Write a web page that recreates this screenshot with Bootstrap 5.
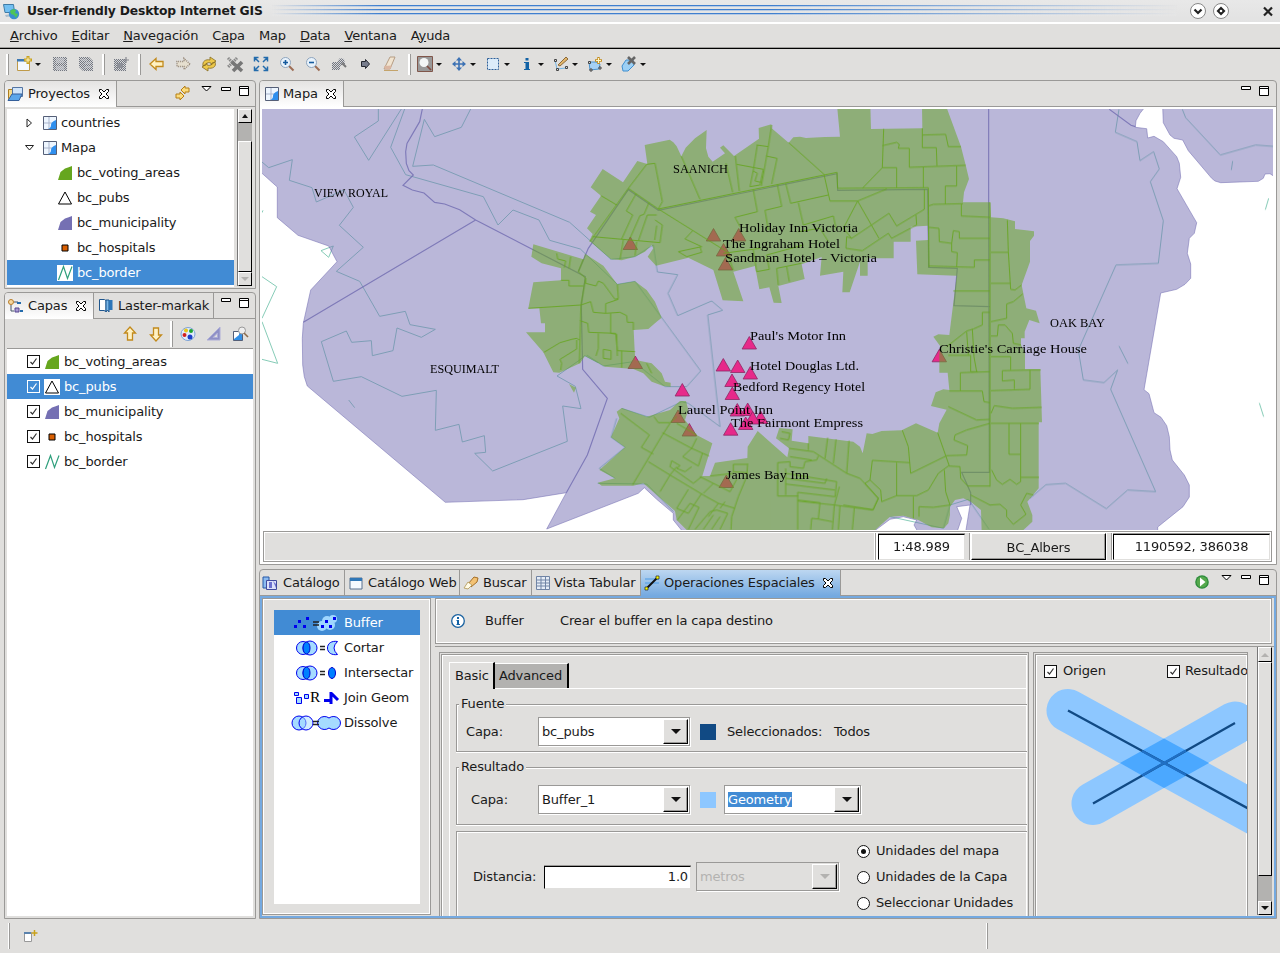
<!DOCTYPE html>
<html lang="es">
<head>
<meta charset="utf-8">
<title>User-friendly Desktop Internet GIS</title>
<link href="https://cdn.jsdelivr.net/npm/bootstrap@5.3.0/dist/css/bootstrap.min.css" rel="stylesheet">
<style>
body{width:1280px;height:953px;overflow:hidden;background:#e0dfdd;color:#1a1a1a;font:13px/16px "DejaVu Sans",sans-serif;letter-spacing:-.15px}
svg{display:block;flex:none;overflow:visible}
svg.clip{overflow:hidden}
.titlebar{height:22px;background:linear-gradient(#e8e8e8,#e2e2e2);font-weight:700;font-size:12.3px}
.stripes{height:11px;margin:0 13px 1px 9px;background:linear-gradient(90deg,#e5e5e5,transparent 12%,transparent 55%,#e5e5e5),repeating-linear-gradient(#3f7fcf 0 1px,#b6cae4 1px 2px,#e5e5e5 2px 4px)}
.menubar{height:27px;border-top:2px solid #fff;border-bottom:1px solid #000;box-shadow:inset 0 -1px #a09f9d;padding:0 0 1px 10px}
.menubar span{margin-right:14px}
.tools{height:31px;padding-bottom:1px}
.slot{width:26px;display:flex;justify-content:center;flex:none}
.slotd{width:34px;padding-left:2px;display:flex;align-items:center;gap:3px;flex:none}
.vsep{width:3px;height:21px;border-left:2px solid #fff;border-right:1px solid #9a9997;flex:none}
.caret{width:0;height:0;border:3px solid transparent;border-top:3px solid #111;border-bottom:0;flex:none}
.pane{border:1px solid #9a9997;border-radius:4px 4px 0 0;flex:none;overflow:hidden;display:flex;flex-direction:column}
.tabs{height:26px;border-bottom:1px solid #9a9997;flex:none;display:flex}
.vtab{height:25px;display:flex;align-items:center;border-right:1px solid #9a9997;padding-left:2px;white-space:nowrap;flex:none;overflow:hidden}
.vtab.on{background:linear-gradient(#e4e3e2,#fff);height:26px}
.vtab svg:first-child{margin-right:4px}
.trow{height:25px;display:flex;align-items:center;flex:none;white-space:nowrap}
.trow.sel,.oprow.sel{background:#418bd4;color:#fff}
.sbar{background:#b3b2b0;flex:none;width:15px;display:flex;flex-direction:column;border-left:1px solid #777}
.knob{background:#e0dfdd;border:1px solid #fff;border-right:1px solid #000;border-bottom:1px solid #000;display:flex;align-items:center;justify-content:center;flex:none}
.thick{box-shadow:inset -1px -1px #9a9997}
.chk{width:13px;height:13px;border:1px solid #111;background:#fff;color:#333;flex:none}
.sel .chk{background:transparent;border-color:#fff;color:#fff}
.etch{border:1px solid #9a9997;box-shadow:inset 1px 1px #fff,inset -1px -1px #fff}
.mstat{height:31px;border:1px solid #9a9997;background:#fff;padding:1px}
.mstat>div{flex:none}
.cell{background:#e0dfdd}
.field{background:#fff;border:1px solid #e0dfdd;border-top:1px solid #000;border-left:1px solid #000;box-shadow:0 -1px #9a9997;text-align:center}
.oprow{height:25px;display:flex;align-items:center;gap:3px;padding-left:17px}
.group{border:1px solid #9a9997;border-right:0;box-shadow:inset 1px 1px #fff,0 1px #fff;position:relative;margin-left:6px;flex:none}
.group>.cap{position:absolute;top:-9px;left:2px;background:#e0dfdd;padding:0 2px}
.combo{height:29px;background:#fff;border:1px solid #9a9997;box-shadow:1px 1px #fff;display:flex;flex:none;padding:1px 1px 1px 3px;align-items:stretch}
.combo .txt{flex:1;align-self:center}
.combo .knob{width:25px;box-shadow:inset -1px -1px #9a9997}
.arrow{width:0;height:0;border:5px solid transparent;border-top:5px solid #111;border-bottom:0}
.dis,.dis .txt{background:#e0dfdd;color:#b3b2b0}
.dis .arrow{border-top-color:#b3b2b0}
.radio{width:13px;height:13px;border:1px solid #111;border-radius:50%;background:#fff;display:flex;align-items:center;justify-content:center}
.radio i{width:5px;height:5px;border-radius:50%;background:#111}
.lbl{font-family:"Liberation Serif",serif;font-size:13px;letter-spacing:0}
</style>
</head>
<body class="d-flex flex-column">
<svg width="0" height="0" class="position-absolute">
<defs>
<symbol id="x" viewBox="0 0 12 12"><path d="M1.5 1.5h2L6 4l2.500-2.500h2v2L8 6l2.500 2.500v2h-2L6 8l-2.500 2.500h-2v-2L4 6 1.500 3.500z" fill="#fff" stroke="#000"/></symbol>
<symbol id="min" viewBox="0 0 10 4"><path d="M.5.5h9v3h-9z" fill="#fff" stroke="#000"/></symbol>
<symbol id="max" viewBox="0 0 10 10"><path d="M.5.5h9v9h-9zM.5 2.500h9" fill="#fff" stroke="#000"/></symbol>
<symbol id="vm" viewBox="0 0 11 6"><path d="M1 .5h9L5.500 5z" fill="#fff" stroke="#000"/></symbol>
<symbol id="map" viewBox="0 0 14 14"><path d="M.5.5h13v13H.5z" fill="#eef6ff" stroke="#555f77"/><path d="M6 1v12M1 7h12" stroke="#a9b4cc"/><path d="M13 4v9H5q3-1 3-4t5-5z" fill="#2f8fee"/></symbol>
<symbol id="poly" viewBox="0 0 14 14"><path d="M0 14L2.500 6 7 2.500 10 1.500 14 0V14z"/></symbol>
<symbol id="tri" viewBox="0 0 16 16"><path d="M8 2L1.500 14h13z" fill="#fff" stroke="#000"/></symbol>
<symbol id="zig" viewBox="0 0 16 16"><path d="M1.500 15L6.500 1.500l4 12L15 1.500" fill="none" stroke="#2f9f7c" stroke-width="1.200"/></symbol>
<symbol id="hosp" viewBox="0 0 16 16"><path d="M5 5h6v6H5z" fill="#d95f02" stroke="#000"/></symbol>
<symbol id="tick" viewBox="0 0 11 11"><path d="M2.500 6l2 2 4-5.500" fill="none" stroke="currentColor" stroke-width="1.200"/></symbol>
<pattern id="dith" width="2" height="2" patternUnits="userSpaceOnUse"><rect width="2" height="2" fill="#d5d6d9"/><path d="M0 0h1v1H0zM1 1h1v1H1z" fill="#73777f"/></pattern>
<symbol id="arr" viewBox="0 0 16 16"><path d="M1 8l6-5.500v3h7v5H7v3z" fill="#fff1c2" stroke="#c28a1c" stroke-width="1.300"/></symbol>
<symbol id="mag" viewBox="0 0 16 16"><path d="M10 10l4.500 4.500" stroke="#9c6d55" stroke-width="2"/><circle cx="6.500" cy="6.500" r="5" fill="#e8f2fb" stroke="#8ea4bd"/></symbol>
</defs>
</svg>

<header class="titlebar d-flex align-items-center">
<svg style="margin-left:3px" width="17" height="17" viewBox="0 0 17 17"><path d="M.5 1.500h10l1 8H2z" fill="#73c0f2" stroke="#407ca6"/><path d="M2 12l7-1 1 2-7 1z" fill="#a8bccb"/><circle cx="11" cy="11" r="5.200" fill="#3a8fd0"/><path d="M7 8l3-2 3 1-1 3 3 1-2 4-2-3-3-1z" fill="#4fc458"/></svg>
<span style="margin-left:7px">User-friendly Desktop Internet GIS</span>
<div class="stripes flex-fill"></div>
<svg class="me-1" width="86" height="18" viewBox="0 0 86 18"><g fill="#fff" stroke="#888"><circle cx="8" cy="9" r="7.500"/><circle cx="31" cy="9" r="7.500"/></g><path d="M4.500 7.500L8 11l3.500-3.500M74 5.500l8 8m0-8l-8 8" fill="none" stroke="#222" stroke-width="2.200"/><path d="M31 4.500L35.500 9 31 13.500 26.500 9z" fill="#222"/><circle cx="31" cy="9" r="1.300" fill="#fff"/></svg>
</header>

<nav class="menubar d-flex align-items-center flex-shrink-0"><span><u>A</u>rchivo</span><span><u>E</u>ditar</span><span><u>N</u>avegación</span><span>C<u>a</u>pa</span><span>Map</span><span><u>D</u>ata</span><span><u>V</u>entana</span><span>A<u>y</u>uda</span></nav>

<div class="tools d-flex align-items-center flex-shrink-0">
<div class="vsep" style="margin:0 5px 0 6px"></div>
<div class="slotd"><svg width="16" height="16"><path d="M1.500 3.500h12v11h-12z" fill="#f4f8fd" stroke="#bf9a48"/><path d="M1 3h9v2.500H1z" fill="#3c78b4"/><path d="M12 0v8M8 4h8" stroke="#c9a21c" stroke-width="3"/><path d="M12 1.500v5M9.500 4h5" stroke="#fff6c8"/></svg><i class="caret"></i></div>
<div class="slot" style="margin-left:-1px"><svg width="16" height="16"><path d="M1 1h14v14H2l-1-1z" fill="url(#dith)"/><path d="M4 2h8v5H4zM4 10h8v4H4z" fill="#c9cbd0" opacity=".6"/></svg></div>
<div class="slot"><svg width="16" height="16"><path d="M1 1h10l4 4v10H5l-4-4z" fill="url(#dith)"/><path d="M7 7h6M7 11h6M3 4h6" stroke="#c9cbd0"/></svg></div>
<div class="vsep" style="margin:0 3px"></div>
<div class="slot"><svg width="16" height="16"><path d="M1 3h12v12H1z" fill="url(#dith)"/><path d="M4 7h6v5H4z" fill="#8d9098"/><path d="M13 1v6M10 4h6" stroke="#85888f" stroke-width="1.200"/></svg></div>
<div class="vsep" style="margin:0 3px 0 4px"></div>
<div class="slot"><svg width="16" height="16"><use href="#arr"/></svg></div>
<div class="slot"><svg width="16" height="16"><path d="M15 8L9 2.500v3H2v5h7v3z" fill="#e6dfcf" stroke="#97897a" stroke-dasharray="1 1" stroke-width="1.500"/></svg></div>
<div class="slot"><svg width="16" height="16"><path d="M2 10C1 5 5 3 9 4V1l6 4-5 4V7C7 6 5 7 5 9zM14 6c2 5-3 7-7 6v3L1 11l5-4v2c3 1 5 0 5-2z" fill="#edc84a" stroke="#856c22" stroke-width=".8"/></svg></div>
<div class="slot"><svg width="16" height="16"><path d="M1 2l9 9M10 2l-9 9" stroke="#888" stroke-width="3" stroke-dasharray="1.500 .7"/><path d="M5 6l10 9M15 6L6 15" stroke="#777" stroke-width="3.600"/></svg></div>
<div class="slot"><svg width="16" height="16"><path d="M2 2l4 4M14 2l-4 4M2 14l4-4M14 14l-4-4M1.500 5.500v-4h4M10.500 1.500h4v4M1.500 10.500v4h4M10.500 14.500h4v-4" fill="none" stroke="#236bac" stroke-width="1.500"/></svg></div>
<div class="slot"><svg width="16" height="16"><use href="#mag"/><path d="M4 6.500h5M6.500 4v5" stroke="#145a9e" stroke-width="1.600"/></svg></div>
<div class="slot"><svg width="16" height="16"><use href="#mag"/><path d="M4 6.500h5" stroke="#145a9e" stroke-width="1.600"/></svg></div>
<div class="slot"><svg width="16" height="16"><path d="M1 6h5l3-4 4 1 1 5-5 2v4H1z" fill="url(#dith)"/><path d="M11 7l4 4" stroke="#777" stroke-width="2"/></svg></div>
<div class="slot"><svg width="16" height="16"><path d="M4.500 5.500h4v-2L12.500 8l-4 4.500v-2h-4z" fill="#777c8c" stroke="#23262f"/></svg></div>
<div class="slot"><svg width="16" height="16"><path d="M1 13L7 1h5L7 13z" fill="#f1e4d0" stroke="#b59c83"/><path d="M1 10l1 3.500h5l2-4z" fill="#dbb7a2"/><path d="M1 14.500h14" stroke="#c4a46b"/></svg></div>
<div class="vsep" style="margin:0 4px 0 4px"></div>
<div class="slotd"><svg width="16" height="16"><path d="M.5.5h15v15H.5z" fill="#999" stroke="#80564a"/><circle cx="7" cy="6.500" r="4.500" fill="#f3f6f6"/><path d="M10 10l4 4" stroke="#7f4b40" stroke-width="1.700"/></svg><i class="caret"></i></div>
<div class="slotd"><svg width="16" height="16"><path d="M8 2v12M2 8h12" stroke="#3d72b4" stroke-width="1.600"/><path d="M8 1L5 4.500h6zM8 15l-3-3.500h6zM1 8l3.500-3v6zM15 8l-3.500-3v6z" fill="#3d72b4"/></svg><i class="caret"></i></div>
<div class="slotd"><svg width="16" height="16"><path d="M2.500 2.500h11v11h-11z" fill="#dcecfa" stroke="#2d5f99" stroke-dasharray="2 1"/></svg><i class="caret"></i></div>
<div class="slotd"><svg width="16" height="16"><path d="M5 6h5v7h1v1H5v-1h1.500V7H5zM6.500 2h3v2.500h-3z" fill="#1262a5"/></svg><i class="caret"></i></div>
<div class="slotd"><svg width="16" height="16"><path d="M2 4l2 9 9-1" fill="none" stroke="#73b4e4"/><path d="M1.500 3.500h2v2h-2zM3.500 12.500h2v2h-2zM12.500 10.500h2v2h-2z" fill="#ddd" stroke="#444"/><path d="M5 9l8-8 2 2-8 7z" fill="#e2b66b" stroke="#8b6939"/></svg><i class="caret"></i></div>
<div class="slotd"><svg width="16" height="16"><path d="M2 6h7l4 2-1 5-9 1z" fill="#a5d1f5" stroke="#4c93cd"/><path d="M1.500 5.500h2v2h-2zM12 11h2v2h-2zM3 13h2v2H3z" fill="#ddd" stroke="#444"/><path d="M11.500 1v7M8 4.500h7" stroke="#c58e1d" stroke-width="2.400"/><path d="M11.500 2v5M9 4.500h5" stroke="#fff6c8"/></svg><i class="caret"></i></div>
<div class="slotd"><svg width="16" height="16"><path d="M1 10l4-6h7l1 5-6 6-5 0z" fill="#9cd0f5" stroke="#3f8fd0"/><path d="M7 1l7 7M14 1L7 8" stroke="#666" stroke-width="2.600"/></svg><i class="caret"></i></div>
</div>

<main class="d-flex flex-shrink-0" style="height:839px;padding-left:4px">
<div class="d-flex flex-column flex-shrink-0" style="width:252px;margin-right:3px">
<section class="pane" style="height:209px;margin-bottom:3px">
<div class="tabs"><div class="vtab on" style="width:112px"><svg width="16" height="16"><path d="M1.500 3.500h5v9h-5z" fill="#f4d98b" stroke="#ad7d20"/><path d="M5.500 1.500h10v9h-10z" fill="#cfe4fa" stroke="#5474a2"/><path d="M1 14.500L5 8h10l-3 6.500z" fill="#5ba6ea" stroke="#355f9a"/></svg><span style="margin-left:1px">Proyectos</span><svg class="ms-2" width="12" height="12"><use href="#x"/></svg></div>
<div class="d-flex ms-auto" style="padding:4px 6px 0 0"><svg width="16" height="16" style="margin:0 10px 0 0"><path d="M6 5l4-4v2h4v4h-4v2zM9 11l-4 4v-2H1V9h4V7z" fill="#fbdc7c" stroke="#b57e15" /></svg><svg width="11" height="6" style="margin:1px 9px 0 0"><use href="#vm"/></svg><svg width="10" height="4" style="margin:2px 8px 0 0"><use href="#min"/></svg><svg width="10" height="10" style="margin-top:1px"><use href="#max"/></svg></div></div>
<div class="d-flex flex-fill bg-white" style="margin:2px 0 1px 2px">
<div style="width:227px;padding-top:1px">
<div class="trow" style="padding-left:19px"><svg width="8" height="10"><path d="M1 1v8l4.500-4z" fill="#fff" stroke="#222"/></svg><svg style="margin:0 4px 0 9px" width="14" height="14"><use href="#map"/></svg><span>countries</span></div>
<div class="trow" style="padding-left:18px"><svg width="10" height="8"><path d="M.5 1.500h8L4.500 6z" fill="#fff" stroke="#222"/></svg><svg style="margin:0 4px 0 8px" width="14" height="14"><use href="#map"/></svg><span>Mapa</span></div>
<div class="trow" style="padding-left:51px"><svg style="margin-right:5px" width="14" height="14" fill="#66a61e"><use href="#poly"/></svg>bc_voting_areas</div>
<div class="trow" style="padding-left:50px"><svg style="margin-right:4px" width="16" height="16"><use href="#tri"/></svg>bc_pubs</div>
<div class="trow" style="padding-left:51px"><svg style="margin-right:5px" width="14" height="14" fill="#7570b3"><use href="#poly"/></svg>bc_municipality</div>
<div class="trow" style="padding-left:50px"><svg style="margin-right:4px" width="16" height="16"><use href="#hosp"/></svg>bc_hospitals</div>
<div class="trow sel" style="padding-left:50px"><svg class="bg-white" style="margin-right:4px" width="16" height="16"><use href="#zig"/></svg>bc_border</div>
</div>
<div class="cell flex-fill d-flex" style="padding:0 0 1px 3px"><div class="sbar"><div class="knob" style="height:14px"><i class="arrow" style="border-width:0 3.500px 4px;border-bottom:4px solid #111"></i></div><div style="height:18px"></div><div class="knob flex-fill"></div><div class="knob" style="height:14px"><i class="arrow" style="border-width:4px 4px 0;border-top-color:#b3b2b0"></i></div></div></div>
</div>
</section>
<section class="pane" style="height:627px">
<div class="tabs"><div class="vtab on" style="width:89px"><svg width="16" height="16"><circle cx="4" cy="4" r="2.500" fill="#f6d9a1" stroke="#b77b26"/><path d="M4 7v6h3M7 4h4" fill="none" stroke="#456"/><path d="M8 10h4v4H8z" fill="#a99bd3" stroke="#54468f"/><path d="M10 5h4M13 13h3" stroke="#236bac" stroke-width="2"/></svg><span style="margin-left:1px">Capas</span><svg style="margin-left:8px" width="12" height="12"><use href="#x"/></svg></div>
<div class="vtab" style="width:120px;padding-left:4px"><svg width="16" height="16"><path d="M1.500 1.500h5l1.500 1v11l-2-1h-4.500z" fill="#fff" stroke="#1f568d"/><path d="M8 2h3v12l-1.500-2L8 14z" fill="#7ab8ea" stroke="#1f568d"/><path d="M11 2h3.500v10H11z" fill="#2c75b8"/></svg><span>Laster-markak</span></div>
<div class="d-flex ms-auto" style="padding:5px 6px 0 0"><svg width="10" height="4" style="margin:0 8px 0 0"><use href="#min"/></svg><svg width="10" height="10"><use href="#max"/></svg></div></div>
<div class="d-flex align-items-center justify-content-end" style="height:30px;border-bottom:1px solid #9a9997;padding-right:5px;margin:0 2px"><svg width="16" height="16" viewBox="0 0 16 16"><g transform="rotate(90 8 8)"><use href="#arr"/></g></svg><svg width="16" height="16" viewBox="0 0 16 16" style="margin-left:10px"><g transform="rotate(-90 8 8)"><use href="#arr"/></g></svg><div class="vsep" style="height:26px;margin:0 7px 0 6px"></div><svg width="16" height="16"><ellipse cx="8" cy="8" rx="7" ry="6.500" fill="#e2ecfb" stroke="#7da3d6"/><circle cx="6" cy="4.500" r="2" fill="#e8c61a"/><circle cx="11" cy="5" r="2" fill="#1fa52e"/><circle cx="4.500" cy="9" r="2" fill="#d2201f"/><circle cx="10" cy="11" r="2.500" fill="#1c40c8"/></svg><svg width="16" height="16" style="margin-left:10px"><path d="M1 14L14 1v13zM7 11.500h4.500V7z" fill="#8f90c6" fill-rule="evenodd" stroke="#adaed8"/></svg><svg width="16" height="16" style="margin-left:10px"><path d="M1.500 5.500h9v9h-9z" fill="#318fe6" stroke="#555f77"/><path d="M2 6h5v3l-5 4z" fill="#fff"/><circle cx="10" cy="4.500" r="3.500" fill="#eee" stroke="#999"/><path d="M12 7l4 4" stroke="#8b6b4b" stroke-width="1.600"/></svg></div>
<div class="bg-white flex-fill" style="margin:0 2px 2px">
<div class="trow" style="padding-left:20px"><span class="chk"><svg width="11" height="11"><use href="#tick"/></svg></span><svg style="margin:0 5px" width="14" height="14" fill="#66a61e"><use href="#poly"/></svg>bc_voting_areas</div>
<div class="trow sel" style="padding-left:20px"><span class="chk"><svg width="11" height="11"><use href="#tick"/></svg></span><svg class="bg-white" style="margin:0 4px" width="16" height="16"><use href="#tri"/></svg>bc_pubs</div>
<div class="trow" style="padding-left:20px"><span class="chk"><svg width="11" height="11"><use href="#tick"/></svg></span><svg style="margin:0 5px" width="14" height="14" fill="#7570b3"><use href="#poly"/></svg>bc_municipality</div>
<div class="trow" style="padding-left:20px"><span class="chk"><svg width="11" height="11"><use href="#tick"/></svg></span><svg style="margin:0 4px" width="16" height="16"><use href="#hosp"/></svg>bc_hospitals</div>
<div class="trow" style="padding-left:20px"><span class="chk"><svg width="11" height="11"><use href="#tick"/></svg></span><svg style="margin:0 4px" width="16" height="16"><use href="#zig"/></svg>bc_border</div>
</div>
</section>
</div>

<div class="d-flex flex-column flex-shrink-0" style="width:1018px">
<section class="pane" style="height:485px;margin-bottom:4px">
<div class="tabs"><div class="vtab on" style="width:84px;padding-left:5px"><svg width="14" height="14"><use href="#map"/></svg><span>Mapa</span><svg style="margin-left:7px" width="12" height="12"><use href="#x"/></svg></div>
<div class="d-flex ms-auto" style="padding:5px 7px 0 0"><svg width="10" height="4" style="margin:0 8px 0 0"><use href="#min"/></svg><svg width="10" height="10"><use href="#max"/></svg></div></div>
<div class="bg-white flex-fill" style="padding:2px 2px 0">
<svg class="clip" width="1011" height="421" viewBox="262 109 1011 421">
<!-- coastline traces -->
<g fill="none" stroke="#1b9e77" stroke-width="2.900" opacity=".55">
<g transform="translate(258 105) scale(.33333)"><path d="M12 171L32 188 103 164 94 226 162 248 175 291 258 255 286 307 244 361 316 427 235 499 305 529 365 634 442 619 456 659 532 673 490 697 417 669 405 737 343 752 340 707 281 712 265 678 190 710 226 829 310 815 432 874 535 856 532 976 603 958 613 1011 679 992 683 1042 650 1045 704 1098 928 1009 914 903 969 911 952 844 897 813 965 765 980 752 1020 773M361 12V48L289 96 332 166 430 12M440 12L398 127 443 209 676 275 720 360 765 315 843 345 875 406 967 432 1078 538M638 12L610 67 530 95 499 43 464 184 526 180 935 352 1059 463M272 885L290 908M12 515L56 545 12 640M12 650L59 775 12 763M189 437L226 423 212 457zM12 323L15 316"/></g>
<g transform="translate(520 105) scale(.33333)"><path d="M273 463L345 455 383 430 400 420 412 501 473 509 444 565 473 632 575 588 608 616 563 630 600 965 505 895 485 890 388 937 305 910M292 538L345 529 425 638 542 798 500 845 435 845 340 770 250 783 200 750M290 940L273 997 315 1027 238 1090 285 1120M233 1135L380 1137 460 1220M1110 1235L1270 1270 1290 1200 1345 1183 1407 1273"/></g>
<g transform="translate(1030 80) scale(.33333)"><path d="M267 88L256 157 321 185 330 242 371 215 388 267 361 305 400 422 385 550 258 555 145 810 160 900 222 908 263 870 242 928 377 1235 293 1230 229 1286 107 1210 48 1214 0 1255M267 798L294 851M457 88L467 113 571 225 677 195 729 199M608 243L604 270M716 355L706 389M688 969L701 1010"/></g>
</g>
<!-- municipalities -->
<g fill="#7570b3" fill-opacity=".5" stroke="#7570b3" stroke-opacity=".55">
<path d="M260 107V171.500L277.300 187V217.700L298 235.300 328.700 246 337 261.700 310.700 290 303.300 323.300 302.300 338.300 302.700 365 304.300 376.700 307.300 386 445.300 502.300 523 499.700 566.300 492.700 546.700 529 638.300 493.300 644.300 487.700 656.700 499.300 673.300 513.300 673.300 520 683 532H873L890 519.300 903.300 516.700 916.700 520 914 525 918 532H957L961.700 518.300 956.700 506.700 970 505 965.700 532H1157.700V527L1183 506.700 1189.300 497V485L1184.300 475 1172.300 460 1170 450 1169.300 436.700 1166.700 425.700 1161 417.300 1154 412.700 1149 393.700 1144 389.700 1160.700 293 1176.700 289.300 1185 284.300 1190.700 278.300V264L1187.300 253.300 1189.300 238.300 1194.300 233.300 1196.700 222.700 1177 188.700 1180.700 177.300 1179.300 163.300 1176.700 156.700 1163.300 141.700 1154 136.300 1147.700 138 1146.700 128.700 1135.300 127.300 1136 120.700 1140 113.300 1145 107z"/>
<path d="M1162.700 107L1163.300 122.700 1170 135 1174 138.300 1182.700 140 1188.300 150.700 1211.700 178.300 1215 181 1220.700 182.700 1258.300 181.300 1263.300 178.300 1265 174 1270 173.700 1275 177V107z"/>
</g>
<g fill="none" stroke="#7570b3" stroke-width="3.500" opacity=".85">
<g transform="translate(258 105) scale(.33333)"><path d="M493 12L485 50 447 115 443 140 445 175 453 197 466 210 435 241 463 255 498 264 530 292 560 297 605 314 653 345 982 515 970 600 974 793 1048 880 988 1050 925 1163M653 345L136 652"/></g>
<g transform="translate(520 105) scale(.33333)"><path d="M175 500L205 430 325 254 415 316 951 206 953 256 1223 253 1226 487 1312 490 1302 602 1410 605M1406 12V300L1408 1102H1325L1352 1163V1200M1768 13L1833 61 1846 65"/></g>
</g>
<!-- pubs -->
<g fill="#e7298a" stroke="#8c2a64" stroke-width=".8" id="pubs"></g>
<!-- voting areas -->
<g transform="translate(520 105) scale(.33333)">
<g opacity=".52" fill="#66a61e">
<path d="M212 247L248 192 309 232 352 168 382 177 374 120 449 104 460 112 470 124 484 154 497 128 525 100 560 75 558 130 565 155 578 170 615 145 600 128 610 121 642 153 717 101 716 69 754 58 755 70 806 113 820 97 840 95 858 99 915 96 960 95 951 0H1051L1053 72 1207 70 1206 0H1277L1323 125 1337 180 1347 222 1332 262 1329 292H1410L1413 337 1450 340 1485 349V372L1542 379V392L1530 408V470L1505 540 1519 610 1548 617 1559 655 1528 645 1514 680V700H1503V720L1515 740V793H1561L1566 952H1556V1150L1522 1190 1537 1230V1250L1505 1280H1385L1383 1215 1352 1190 1330 1180 1305 1185 1290 1205V1230L1285 1255 1272 1270 1235 1267 1195 1245 1150 1232 1110 1235 1060 1280H505L470 1245 465 1218 370 1135 340 1142H245L233 1133 285 1120 238 1095 315 1027 273 997 298 940 290 920 305 909 380 935 450 915 480 888H498L505 915 495 945 530 990 577 1015 547 1113H570L585 1073 682 1059 683 1025 713 978 802 1057 807 1030 768 1000 778 969 818 973 815 1007 865 1015V993L1000 1010 1020 1025 1028 1045 1040 985 1057 987 1085 978 1145 976 1188 955 1253 983 1258 955 1280 914 1233 903 1247 862 1270 853 1288 855 1283 803H1258V745L1262 725 1240 695 1255 688 1288 690 1310 512 1192 508 1188 407 1225 405 1223 362 1172 365V410H1121V460H1043V512H1020V470L989 562H967L970 500 900 512 905 456 845 478 854 522 775 543 785 594 761 593 748 547 718 553 705 483 640 500 670 589 608 586 580 495 505 458 408 482 383 455 400 430 395 420 375 440 345 455 305 466 273 463 208 407 218 387 201 370 228 330 210 320 243 272z"/>
<path d="M40 418L190 463 195 446 250 482 292 538 345 529 380 555 405 590 425 638 410 650 385 672 341 675 344 737 346 765 395 775 425 805 435 830 452 833V845L430 843 395 830 370 805 340 792 255 785 195 753 180 775 118 803 100 802 70 742 18 682H75V655H63L58 610H25L40 532 123 526V490L65 475 34 455zM147 837L168 848 162 863z"/>
</g>
<g fill="none" stroke="#66a61e" stroke-width="3" opacity=".85">
<path d="M243 272L290 300M218 395L420 413 427 360 405 345M380 178L405 175 427 290 415 312M380 178L325 250 210 410M484 154L540 283M325 250L415 312 620 440M415 312L951 202M348 267L319 318 338 330 305 402M387 293L372 328 360 332 330 400M410 330H382L355 408M410 362L404 405M618 175L638 262M646 153L658 258M650 178L730 193 720 240 690 245 700 195 712 120M700 198L712 205 705 228 722 232M755 60L745 125 710 120M745 125L724 243M738 153L771 160 755 237M806 113L912 208M700 255L712 320 645 337 660 365M772 238L785 304 735 316 745 375M797 235L812 295 925 270M835 293L850 360 940 333 948 370M518 377L495 402 545 425 475 440 500 455 545 442 540 425M300 463L310 405M345 452L350 410M640 495L620 440M610 445L720 430M700 435L710 500 748 493 740 450M800 485L808 530M775 540L770 490 844 475M740 450L850 420M835 380L900 370 925 410"/>
<path d="M110 445L113 462 137 468 133 488M152 455L147 490M190 463L175 500 197 520V535L228 543 235 528 250 535 285 583 295 580 292 538M123 526H147V543H190M25 610L183 600 178 775M183 600L212 590 220 622 257 625V596L295 583M272 625V685L290 688 292 753M197 520L183 600M180 647L203 655 206 682 287 685 292 737 345 740M257 625L300 622 320 632 322 652H340V675M228 753L235 730V685M250 733L273 737V763L250 760zM305 737V788M72 742L120 713 155 703 170 700 178 705M170 705V732L120 763 125 775 122 795M380 775L395 805"/>
<g transform="translate(-60 645)"><path d="M362 280L448 345 424 382 460 402M398 494L487 345 510 310M462 290L475 308H510L530 290M530 310L590 345M487 338L575 385 590 355M575 385L627 408M575 385L548 410 595 438 607 400M515 422L540 437 530 445 555 455 575 440M515 422L510 440 580 490 605 470M445 425L510 465 480 515M530 440L510 465 610 525M565 508L530 565 565 580 605 520M610 520L640 490 600 470M640 490L690 515 710 478M610 525L655 550 625 590M565 628L597 562 570 550 532 600M585 628L630 575 650 570 683 580 660 628M655 550L705 565M675 545L660 565M610 628L640 585M635 628L660 590M743 430L740 470 715 530 695 590 693 629M630 468L700 460M700 455V433H742M700 455L742 458M845 335L870 340 865 360 840 355M895 528H833V428L870 425V440L910 445 915 425 950 420 955 408M857 445V525M867 385L940 395 1040 460 1080 475 1135 535 1118 570 1003 555 893 543M983 353L975 415M1008 358L1000 430M1047 362L1040 460M925 370V390M870 410L935 420M857 460L1010 485M857 475L975 490 980 475M857 492L1005 510M893 629V517L1005 530 1010 485M893 540L960 548 955 597 935 595 932 629M955 597L997 605M1018 500L1003 555 997 629M1063 562L1057 629M1020 556L1015 629"/></g>
<g transform="translate(840 0)"><path d="M251 72L247 188 187 250M247 122L290 112 298 118 295 130H328V187L497 181M247 188H290V250M367 90L437 88 445 125H483M367 70V128H409L411 183M370 187V248M470 183V243H436V298M111 202L113 250 385 248 387 487M72 208L90 288H173L130 370 155 400 140 395M385 303L400 298 489 296M373 253V313L290 363 267 325 155 400M173 288L260 252M173 288L237 400M140 395L138 430 187 437 265 385 275 400 350 360 348 330M484 297V333L570 337M387 367L417 370 418 410 455 415 460 377 478 380V400H570M455 415V440L472 443 470 487M387 483L523 487V465H570M460 558H570M570 292V1145M573 442H625M622 345L625 440 632 553 645 555 665 540M573 535H632M573 650L620 640V597L640 590 668 567M570 622H547V660L520 672 500 678 440 725M517 672L522 755 530 800M500 680L505 750M445 751H512V800H534M481 858V803L570 800M448 858H547L552 890 570 893M445 905L530 945 570 943M573 693H592L595 660 615 660 637 685 640 715 663 720M573 755H632V795M607 797V828L643 825V852M607 797L690 795M573 857L690 853V795H722M573 925L583 902 637 910 725 907M570 955L500 975 465 990 462 1005 503 1022 500 1050 440 1052M573 955H717M627 955V1048H662M662 955V1130M662 1117H717M575 1095L590 1125 607 1138 630 1123 650 1138 662 1130M413 983L448 1083M307 976L325 1025 332 1105 440 1052M330 1073L217 1066 210 1125 242 1155 245 1190 290 1172H350L385 1155 415 1105 445 1083 480 1085 482 1120 503 1143H570M210 1125L195 1135 235 1180 220 1214 130 1200M290 1073V1172M433 1095L437 1160 450 1200M340 1175V1240M357 1235V1205L400 1207 450 1200M512 1170L570 1200 600 1198 620 1215V1235L640 1258 678 1228 662 1200 680 1165 700 1170"/></g>
</g></g>
<g class="lbl" id="labels"></g>
</svg>
<div class="mstat d-flex align-items-stretch" style="margin:1px 2px 0 1px">
<div class="cell" style="width:609px"></div><div style="width:3px;border-left:1px solid #9a9997;margin-left:1px"></div>
<div class="field d-flex align-items-center justify-content-center" style="width:87px;margin-top:1px">1:48.989</div><div class="cell" style="width:5px;border-right:1px solid #9a9997;margin-right:1px"></div>
<div class="knob thick" style="width:135px;padding-top:2px">BC_Albers</div><div class="cell" style="width:5px;border-right:1px solid #9a9997;margin:0 1px"></div>
<div class="field flex-fill d-flex align-items-center justify-content-center" style="margin-top:1px">1190592, 386038</div>
</div>
</div>
</section>

<section class="pane" style="height:350px">
<div class="tabs">
<div class="vtab" style="width:85px"><svg width="16" height="16"><path d="M1 2h6v11H1z" fill="#8bbaf0" stroke="#2456a6"/><path d="M4.500 5.500h10v9h-10z" fill="#dce1fa" stroke="#414a9d"/><path d="M7 7h3v6H7zM11 6l3 3v4z" fill="#6c70cf"/></svg><span style="margin-left:1px">Catálogo</span></div>
<div class="vtab" style="width:115px;padding-left:4px"><svg width="14" height="14"><path d="M1 2h12v11H1z" fill="#f5faff" stroke="#56708f"/><path d="M1 2h12v3H1z" fill="#2f77b7"/></svg><span style="margin-left:1px">Catálogo Web</span></div>
<div class="vtab" style="width:72px;padding-left:3px"><svg width="16" height="16"><path d="M5 9l6-7 4 1-1 4-6 5z" fill="#f3c274" stroke="#a56f27"/><path d="M1 13l4-6 4 3-4 4z" fill="#fffbe6" stroke="#bda66c"/></svg><span>Buscar</span></div>
<div class="vtab" style="width:109px;padding-left:4px"><svg width="14" height="14"><path d="M.5.5h13v13H.5zM.5 4h13M.5 7h13M.5 10h13M5 .5v13M9.500.5v13" fill="#e6edf7" stroke="#7084a5"/></svg><span>Vista Tabular</span></div>
<div class="vtab" style="width:200px;height:26px;background:linear-gradient(#bdd7f1,#74a9e0);padding-left:3px"><svg width="16" height="16"><path d="M1 4h14M1 8h14" stroke="#4d9ce6"/><path d="M2 14L14 2" stroke="#111" stroke-width="2"/><path d="M1 12h3v3H1zM12 1h3v3h-3z" fill="#ff0" stroke="#222" stroke-width=".7"/></svg><span>Operaciones Espaciales</span><svg style="margin-left:7px" width="12" height="12"><use href="#x"/></svg></div>
<div class="d-flex ms-auto" style="padding:5px 7px 0 0"><svg width="14" height="14" style="margin:0 12px 0 0"><circle cx="7" cy="7" r="6.800" fill="#2c8c3c"/><circle cx="7" cy="7" r="5.500" fill="#55a84c"/><path d="M5 2.500v9L10.500 7z" fill="#fff"/></svg><svg width="11" height="6" style="margin-right:9px"><use href="#vm"/></svg><svg width="10" height="4" style="margin:0 8px 0 0"><use href="#min"/></svg><svg width="10" height="10"><use href="#max"/></svg></div></div>
<div class="flex-fill d-flex overflow-hidden" style="border:2px solid #74a9e0">
<div class="etch flex-shrink-0" style="width:169px;padding:11px 10px 9px 11px;margin:0 0 1px"><div class="bg-white" style="height:294px;width:146px">
<div class="oprow sel"><svg width="50" height="16"><g fill="#9fd6ff"><circle cx="31" cy="11" r="5"/><circle cx="36" cy="6" r="5"/><circle cx="42" cy="4" r="4"/><circle cx="39" cy="10" r="5"/></g><path d="M3 10h3v3H3zM7 5h3v3H7zM12 10h3v3h-3zM15 2h3v3h-3zM30 10h3v3h-3zM34 5h3v3h-3zM38 10h3v3h-3zM42 2h3v3h-3z" fill="#00e"/><path d="M22 7h6M22 10h6" stroke="#222" stroke-width="1.500"/></svg>Buffer</div>
<div class="oprow"><svg width="50" height="16"><g fill="#a5dbff" stroke="#00e"><circle cx="12" cy="8" r="6.500"/><circle cx="19" cy="8" r="7"/></g><ellipse cx="15.500" cy="8" rx="3.500" ry="6" fill="#0080ff" stroke="#00c"/><path d="M29 6.500h5M29 9.500h5" stroke="#222" stroke-width="1.500"/><path d="M46.500 1.500c-6-1-10 2-10 6.500s4 7.500 10 6.500q-7-6.500 0-13z" fill="#a5dbff" stroke="#00e"/></svg>Cortar</div>
<div class="oprow"><svg width="50" height="16"><g fill="#a5dbff" stroke="#00e"><circle cx="12" cy="8" r="6.500"/><circle cx="19" cy="8" r="7"/></g><ellipse cx="15.500" cy="8" rx="3.500" ry="6" fill="#0080ff" stroke="#00c"/><path d="M29 6.500h5M29 9.500h5" stroke="#222" stroke-width="1.500"/><ellipse cx="41" cy="8" rx="3.500" ry="5.500" fill="#0080ff" stroke="#00c"/></svg>Intersectar</div>
<div class="oprow"><svg width="50" height="16"><path d="M3.500 2.500h4v3h-4zM5.500 7.500h5v6h-5zM13.500 4.500h4v4h-4z" fill="#a5dbff" stroke="#00e"/><text x="19" y="12" font-family="Liberation Serif,serif" font-size="15.500">R</text><path d="M33 10.500h7M40 2v12M40 3l7 7" stroke="#00e" stroke-width="3"/></svg>Join Geom</div>
<div class="oprow"><svg width="50" height="16"><g fill="#a5dbff" stroke="#00e"><circle cx="8" cy="8" r="7"/><circle cx="15" cy="8" r="7" fill-opacity=".5"/><path d="M38 3a7 6.500 0 1 0 0 10 7 6.500 0 1 0 0-10z"/></g><path d="M22 6.500h6M22 9.500h6" stroke="#222" stroke-width="1.500"/></svg>Dissolve</div>
</div></div>
<div class="flex-fill d-flex flex-column overflow-hidden" style="padding-left:4px">
<div class="etch d-flex align-items-center flex-shrink-0" style="height:46px;margin:0 0 2px;width:837px;padding-left:15px"><svg width="14" height="14"><circle cx="7" cy="7" r="6.300" fill="#fff" stroke="#1a62a0" stroke-width="1.300"/><path d="M5.500 6H8v4h1v1H5.500v-1H6V7h-.5zM6 3h2v2H6z" fill="#1262a5"/></svg><span style="margin-left:20px;width:75px">Buffer</span><span>Crear el buffer en la capa destino</span></div>
<div class="flex-fill d-flex overflow-hidden" style="border-top:1px solid #9a9997">
<div class="flex-shrink-0 overflow-hidden" style="width:590px;height:276px;margin:5px 0 0 4px;border:1px solid #9a9997;border-bottom:0;padding:1px"><div class="etch" style="height:276px;padding:7px 0 0 7px;border-right:0;border-bottom:0">
<div class="d-flex align-items-end" style="height:27px;border-left:1px solid #fff"><div style="width:45px;height:27px;border-top:1px solid #fff;border-right:2px solid #000;padding:5px 0 0 5px">Basic</div><div class="flex-fill d-flex" style="height:26px;border-bottom:1px solid #fff"><div style="width:74px;background:#b3b2b0;border-right:2px solid #000;border-top:1px solid #fff;padding:4px 0 0 4px">Advanced</div></div></div>
<div style="border-left:1px solid #fff;height:242px;padding-top:15px">
<div class="group d-flex align-items-center" style="height:48px;padding:7px 0 0 9px"><span class="cap">Fuente</span><span style="width:72px">Capa:</span><div class="combo" style="width:152px"><span class="txt">bc_pubs</span><span class="knob"><i class="arrow"></i></span></div><div style="width:16px;height:16px;background:#114a84;margin:0 11px 0 10px"></div><span style="width:107px">Seleccionados:</span><span>Todos</span></div>
<div class="group d-flex align-items-center" style="height:58px;margin-top:15px;padding:7px 0 0 14px"><span class="cap">Resultado</span><span style="width:67px">Capa:</span><div class="combo" style="width:152px"><span class="txt">Buffer_1</span><span class="knob"><i class="arrow"></i></span></div><div style="width:16px;height:16px;background:#8dc7ff;margin:0 8px 0 10px"></div><div class="combo" style="width:137px"><span class="txt"><span style="background:#418bd4;color:#fff">Geometry</span></span><span class="knob"><i class="arrow"></i></span></div></div>
<div class="group d-flex align-items-start" style="height:112px;margin-top:6px;padding:0 0 0 16px"><span style="width:71px;margin-top:37px">Distancia:</span><div class="field" style="width:147px;height:23px;margin-top:34px;text-align:right;padding:2px 2px 0 0">1.0</div><div class="combo dis" style="width:143px;margin:30px 18px 0 5px"><span class="txt">metros</span><span class="knob"><i class="arrow"></i></span></div>
<div class="d-flex flex-column" style="gap:10px;margin-top:11px;white-space:nowrap"><div class="d-flex align-items-center"><span class="radio"><i></i></span><span style="margin-left:6px">Unidades del mapa</span></div><div class="d-flex align-items-center"><span class="radio"></span><span style="margin-left:6px">Unidades de la Capa</span></div><div class="d-flex align-items-center"><span class="radio"></span><span style="margin-left:6px">Seleccionar Unidades</span></div></div></div>
</div></div></div>
<div class="flex-shrink-0 overflow-hidden" style="width:215px;height:276px;margin:5px 0 0 4px;border:1px solid #9a9997;border-bottom:0;padding:1px 0 0 1px"><div class="etch" style="height:276px;padding:8px 0 0 8px;border-right:0;width:212px;overflow:hidden">
<div class="d-flex align-items-center" style="white-space:nowrap"><span class="chk"><svg width="11" height="11"><use href="#tick"/></svg></span><span style="width:104px;margin-left:6px;flex:none">Origen</span><span class="chk"><svg width="11" height="11"><use href="#tick"/></svg></span><span style="margin-left:5px">Resultado</span></div>
<svg class="clip" width="204" height="160" viewBox="1044 679 204 160"><g fill="none" stroke="#8dc7ff" stroke-width="43" stroke-linecap="round"><path d="M1068 710.500L1260 816M1093 803.500L1235 723"/></g><path d="M1164 738.500L1209 763 1164 788 1120 763z" fill="#4ba8ff"/><path d="M1068 710.500L1260 815M1093 803.500L1235 723" stroke="#114a84" stroke-width="2.300" fill="none"/><path d="M1142 751l44 24M1142 775.500l44-25" stroke="#1f6fc4" stroke-width="2.300"/></svg>
</div></div>
<div class="sbar" style="margin-left:9px;margin-bottom:1px"><div class="knob" style="height:15px"><i class="arrow" style="border-width:0 4px 4px;border-bottom:4px solid #b3b2b0"></i></div><div class="knob" style="height:214px"></div><div class="flex-fill"></div><div class="knob" style="height:14px"><i class="arrow" style="border-width:4px 4px 0"></i></div></div>
</div></div>
</div>
</section>
</div>
</main>
<footer class="d-flex align-items-center flex-fill"><div class="vsep" style="height:26px;margin-left:8px;border-left-width:1px;width:2px"></div><svg style="margin-left:13px" width="15" height="14"><path d="M1.500 3.500h7v9h-7z" fill="#fff" stroke="#999"/><path d="M1 3h7v2H1z" fill="#5b83ad"/><path d="M11.500 1v6M8.500 4h6" stroke="#c9a21c" stroke-width="1.500"/></svg><div class="vsep" style="height:26px;margin-left:948px;border-left-width:1px;width:2px"></div></footer>

<script src="https://cdn.jsdelivr.net/npm/bootstrap@5.3.0/dist/js/bootstrap.bundle.min.js"></script>
<script>
// pub markers: apex x, apex y
const pubs=[[630.3,237],[713.5,228.500],[738.7,228.500],[723.5,243.500],[725.5,257.500],[749.3,336.500],[723.3,358.500],[737.7,360],[750.3,366.500],[732,374],[732.3,387],[682.3,383.500],[635.3,356],[678,410],[689.3,423.500],[737.3,403.500],[747.7,403],[760.7,411],[752.7,411.500],[745.7,417],[730.7,422.700],[726.3,475],[939.3,349.300]];
document.getElementById('pubs').innerHTML=pubs.map(([x,y])=>`<path d="M${x} ${y}l7.200 12.500h-14.400z"/>`).join('');
// place labels: text, x, baseline, width
const labels=[['VIEW ROYAL',314,197,74],['SAANICH',673,173,55],['ESQUIMALT',430,373,69],['OAK BAY',1050,327,55],['Holiday Inn Victoria',739,232,119],['The Ingraham Hotel',723,248,117],['Sandman Hotel – Victoria',725,262,152],["Paul's Motor Inn",750,340,96],['Hotel Douglas Ltd.',750,370,109],['Bedford Regency Hotel',733,391,132],['Laurel Point Inn',678,414,95],['The Fairmont Empress',731,427,132],['James Bay Inn',726,479,83],["Christie's Carriage House",939,353,148]];
document.getElementById('labels').innerHTML=labels.map(([t,x,y,w])=>`<text x="${x}" y="${y}" textLength="${w}" lengthAdjust="spacingAndGlyphs">${t}</text>`).join('');
</script>
</body>
</html>
